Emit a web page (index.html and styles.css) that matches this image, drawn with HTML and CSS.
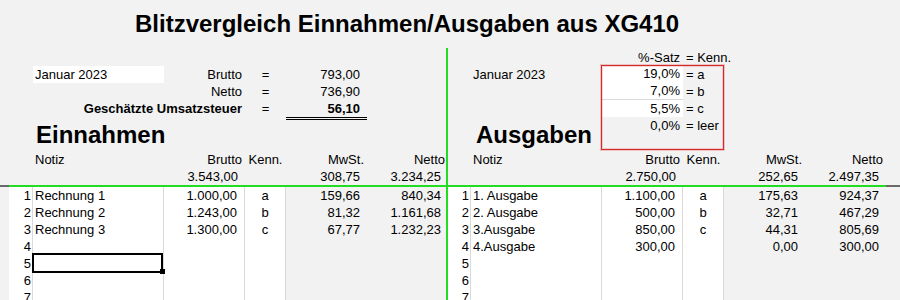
FILE: index.html
```html
<!DOCTYPE html>
<html lang="de">
<head>
  <meta charset="UTF-8" />
  <title>Blitzvergleich Einnahmen/Ausgaben</title>
  <link rel="stylesheet" href="styles.css">
</head>
<body>
  <h1 class="title">Blitzvergleich Einnahmen/Ausgaben aus XG410</h1>

  <div class="sheet">
    <!-- Einnahmen -->
    <div class="pane pane-left">
      <div class="summary">
        <div class="notiz r2 entry-plain">Januar 2023</div>
        <div class="brutto r2 head">Brutto</div>
        <div class="kenn r2 mid">=</div>
        <div class="mwst r2 num">793,00</div>

        <div class="brutto r3 head">Netto</div>
        <div class="kenn r3 mid">=</div>
        <div class="mwst r3 num">736,90</div>

        <div class="wide r4 head bold">Geschätzte Umsatzsteuer</div>
        <div class="kenn r4 mid">=</div>
        <div class="mwst r4 num bold total">56,10</div>

        <h2 class="section">Einnahmen</h2>
      </div>

      <div class="ledger">
        <div class="row">
          <div class="notiz">Notiz</div>
          <div class="brutto head">Brutto</div>
          <div class="kenn mid">Kenn.</div>
          <div class="mwst head">MwSt.</div>
          <div class="netto head">Netto</div>
        </div>
        <div class="row sum">
          <div class="pad"></div>
          <div class="no"></div>
          <div class="notiz"></div>
          <div class="brutto num">3.543,00</div>
          <div class="kenn"></div>
          <div class="mwst num">308,75</div>
          <div class="netto num">3.234,25</div>
        </div>
        <div class="row">
          <div class="no entry">1</div><div class="notiz entry">Rechnung 1</div><div class="brutto entry num">1.000,00</div><div class="kenn entry mid">a</div>
          <div class="mwst num">159,66</div><div class="netto num">840,34</div>
        </div>
        <div class="row">
          <div class="no entry">2</div><div class="notiz entry">Rechnung 2</div><div class="brutto entry num">1.243,00</div><div class="kenn entry mid">b</div>
          <div class="mwst num">81,32</div><div class="netto num">1.161,68</div>
        </div>
        <div class="row">
          <div class="no entry">3</div><div class="notiz entry">Rechnung 3</div><div class="brutto entry num">1.300,00</div><div class="kenn entry mid">c</div>
          <div class="mwst num">67,77</div><div class="netto num">1.232,23</div>
        </div>
        <div class="row">
          <div class="no entry">4</div><div class="notiz entry"></div><div class="brutto entry"></div><div class="kenn entry"></div>
        </div>
        <div class="row">
          <div class="no entry">5</div><div class="notiz entry selected"></div><div class="brutto entry"></div><div class="kenn entry"></div>
        </div>
        <div class="row">
          <div class="no entry">6</div><div class="notiz entry"></div><div class="brutto entry"></div><div class="kenn entry"></div>
        </div>
        <div class="row">
          <div class="no entry">7</div><div class="notiz entry"></div><div class="brutto entry"></div><div class="kenn entry"></div>
        </div>
      </div>
    </div>

    <!-- Ausgaben -->
    <div class="pane pane-right">
      <div class="summary">
        <div class="brutto r1 head">%-Satz</div>
        <div class="kenn r1 key">= Kenn.</div>

        <div class="notiz r2">Januar 2023</div>
        <div class="brutto r2 rate line">19,0%</div>
        <div class="kenn r2 key">= a</div>

        <div class="brutto r3 rate line">7,0%</div>
        <div class="kenn r3 key">= b</div>

        <div class="brutto r4 rate">5,5%</div>
        <div class="kenn r4 key">= c</div>

        <div class="brutto r5 head">0,0%</div>
        <div class="kenn r5 key">= leer</div>

        <h2 class="section">Ausgaben</h2>
        <div class="rates-box"></div>
      </div>

      <div class="ledger">
        <div class="row">
          <div class="notiz">Notiz</div>
          <div class="brutto head">Brutto</div>
          <div class="kenn mid">Kenn.</div>
          <div class="mwst head">MwSt.</div>
          <div class="netto head">Netto</div>
        </div>
        <div class="row sum">
          <div class="no"></div>
          <div class="notiz"></div>
          <div class="brutto num">2.750,00</div>
          <div class="kenn"></div>
          <div class="mwst num">252,65</div>
          <div class="netto num">2.497,35</div>
          <div class="pad"></div>
        </div>
        <div class="row">
          <div class="no entry">1</div><div class="notiz entry">1. Ausgabe</div><div class="brutto entry num">1.100,00</div><div class="kenn entry mid">a</div>
          <div class="mwst num">175,63</div><div class="netto num">924,37</div>
        </div>
        <div class="row">
          <div class="no entry">2</div><div class="notiz entry">2. Ausgabe</div><div class="brutto entry num">500,00</div><div class="kenn entry mid">b</div>
          <div class="mwst num">32,71</div><div class="netto num">467,29</div>
        </div>
        <div class="row">
          <div class="no entry">3</div><div class="notiz entry">3.Ausgabe</div><div class="brutto entry num">850,00</div><div class="kenn entry mid">c</div>
          <div class="mwst num">44,31</div><div class="netto num">805,69</div>
        </div>
        <div class="row">
          <div class="no entry">4</div><div class="notiz entry">4.Ausgabe</div><div class="brutto entry num">300,00</div><div class="kenn entry"></div>
          <div class="mwst num">0,00</div><div class="netto num">300,00</div>
        </div>
        <div class="row">
          <div class="no entry">5</div><div class="notiz entry"></div><div class="brutto entry"></div><div class="kenn entry"></div>
        </div>
        <div class="row">
          <div class="no entry">6</div><div class="notiz entry"></div><div class="brutto entry"></div><div class="kenn entry"></div>
        </div>
        <div class="row">
          <div class="no entry">7</div><div class="notiz entry"></div><div class="brutto entry"></div><div class="kenn entry"></div>
        </div>
      </div>
    </div>
  </div>
</body>
</html>
```

FILE: styles.css
```css
* { box-sizing: border-box; }
body { margin: 0; background: #f2f2f2; color: #000; font-family: "Liberation Sans", Arial, sans-serif; font-size: 13px; overflow: hidden; }

.title { margin: 0; height: 48px; line-height: 48px; padding-left: 135px; font-size: 24px; font-weight: bold; white-space: nowrap; }

.sheet { display: flex; }
.pane-left { width: 446px; --cols: [pad] 9px [no] 24px [notiz] 131px [brutto] 81px [kenn] 41px [mwst] 81px [netto] 79px; }
.pane-right { flex: 1; border-left: 2px solid #22dd22; --cols: [no] 23px [notiz] 131px [brutto] 81px [kenn] 41px [mwst] 81px [netto] 81px [pad] 1fr; }

/* upper block: month, totals, tax keys */
.summary { display: grid; grid-template-columns: var(--cols); grid-template-rows: 18px repeat(5, 17px); line-height: 17px; white-space: nowrap; }
.summary > * { align-self: end; }
.r1 { grid-row: 1; }
.r2 { grid-row: 2; }
.r3 { grid-row: 3; }
.r4 { grid-row: 4; }
.r5 { grid-row: 5; }
.wide { grid-column: no / kenn; }
.entry-plain { background: #fff; padding-left: 2px; }
.bold { font-weight: bold; }
.total { align-self: start; height: 20px; border-bottom: 3px double #000; }
.key { padding-left: 3px; }
.rate { background: #fff; text-align: right; padding-right: 3px; }
.rate.line { border-bottom: 1px solid #d9d9d9; }
.rates-box {
  grid-row: 2 / 7; grid-column: brutto / mwst; align-self: stretch;
  margin: -1px 0 1px -1px; border: 1px solid #d42a2a;
  box-shadow: 0 0 0 1px rgba(220, 50, 50, 0.25), inset 0 0 0 1px rgba(220, 50, 50, 0.2);
}

.section { grid-row: 5 / 7; align-self: start; margin: 0; padding-top: 4px; line-height: 28px; font-size: 24px; font-weight: bold; }
.pane-left .section { grid-column: notiz / mwst; padding-left: 3px; }
.pane-right .section { grid-column: notiz / brutto; padding-left: 5px; }

/* booking list */
.row { display: grid; grid-template-columns: var(--cols); height: 17px; line-height: 17px; white-space: nowrap; }
.row.sum { height: 19px; }
.row.sum > * { border-bottom: 2px solid #22dd22; }
.row.sum > .pad { border-bottom-color: #6a6a6a; }

.pad { grid-column: pad / span 1; }
.no { grid-column: no / span 1; text-align: right; padding-right: 1px; }
.notiz { grid-column: notiz / span 1; padding-left: 2px; }
.brutto { grid-column: brutto / span 1; }
.kenn { grid-column: kenn / span 1; }
.mwst { grid-column: mwst / span 1; }
.netto { grid-column: netto / span 1; }

.num { text-align: right; padding-right: 7px; }
.head { text-align: right; padding-right: 3px; }
.mid { text-align: center; }
.pane-left .netto.num { padding-right: 5px; }
.pane-left .netto.head { padding-right: 1px; }

.entry { background: #fff; border-right: 1px solid #d9d9d9; border-bottom: 1px solid #d9d9d9; }

/* active cell with fill handle */
.selected { position: relative; }
.selected::after { content: ""; position: absolute; top: -2px; left: -1px; right: 0; bottom: -1px; border: 2px solid #000; }
.selected::before { content: ""; position: absolute; right: -2px; bottom: -2px; width: 5px; height: 5px; background: #000; z-index: 1; }
```
